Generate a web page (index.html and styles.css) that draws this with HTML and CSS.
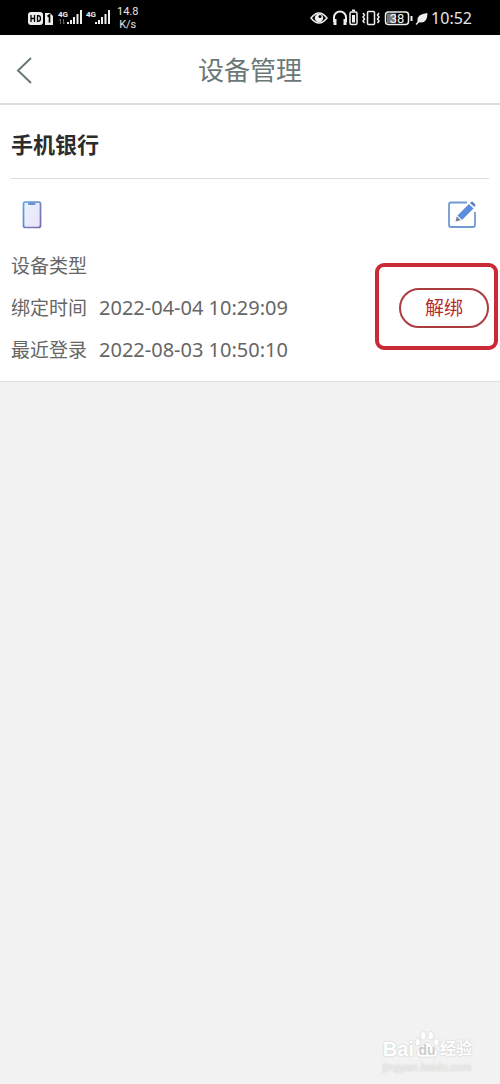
FILE: index.html
```html
<!DOCTYPE html>
<html lang="zh-CN">
<head>
<meta charset="utf-8">
<meta name="viewport" content="width=device-width, initial-scale=1">
<title>设备管理</title>
<link rel="stylesheet" href="styles.css">
</head>
<body>
<div class="status">
  <div class="status-left">
    <svg width="82" height="20" viewBox="0 0 82 20" fill="#eee" aria-hidden="true">
      <rect x="0" y="4" width="15" height="13" rx="3"/>
      <path d="M3 7v7M6.500 7v7M3 10.500H6.500M9.500 7.700v5.600h.5q2.500 0 2.500-2.800t-2.500-2.800z" fill="none" stroke="#000" stroke-width="1.300"/>
      <path d="M17 5h5l3 3v9h-8z"/>
      <path d="M19.500 8.500l2-1.500v7.500" fill="none" stroke="#000" stroke-width="1.700"/>
      <text x="30" y="9" class="tiny">4G</text>
      <path d="M32.500 11v5M31 12.500l1.500-1.500M35.500 11v5M35.500 16l1.500-1.500" stroke="#666" fill="none"/>
      <path d="M39 14h2v2h-2zM42 12h2v4h-2zM45 9h2v7h-2zM48.500 6h2v10h-2zM52 2h2v14h-2z"/>
      <text x="58" y="9" class="tiny">4G</text>
      <path d="M67 14h2v2h-2zM70 12h2v4h-2zM73 9h2v7h-2zM76.500 6h2v10h-2zM80 2h2v14h-2z"/>
    </svg>
    <div class="speed"><span>14.8</span><span>K/s</span></div>
  </div>
  <div class="status-right">
    <svg width="119" height="20" viewBox="0 0 119 20" fill="none" stroke="#eee" stroke-width="1.500" aria-hidden="true">
      <path d="M1 10q8-10 16 0q-8 10-16 0z"/>
      <circle cx="9" cy="10" r="4.200" fill="#eee" stroke="none"/>
      <circle cx="10" cy="8.500" r="1.500" fill="#000" stroke="none"/>
      <path d="M24 14V9.500a6 6 0 0 1 12 0V14" stroke-width="2"/>
      <path d="M25 11v6M35 11v6" stroke-width="3"/>
      <path d="M42 2.500h3" stroke-width="2"/>
      <rect x="40" y="4" width="7" height="12.500" rx="1.500"/>
      <path d="M42 7h3v7.500h-3z" fill="#eee" stroke="none"/>
      <path d="M53 5l1.500 2-1.500 2 1.500 2-1.500 2 1.500 2M69 5l-1.500 2 1.500 2-1.500 2 1.500 2-1.500 2"/>
      <rect x="57.500" y="3.500" width="7" height="13" rx="1"/>
      <rect x="75.500" y="4" width="23" height="12.500" rx="3"/>
      <path d="M77 5.500h9V15h-9z" fill="#777" stroke="none"/>
      <path d="M101.500 8v5" stroke-width="2"/>
      <text x="87" y="15" text-anchor="middle" class="battery">38</text>
      <path d="M107.500 13q-1-7 10-8q0 10-7 9.500l-2-.5l4.500-4.500l-6 6z" fill="#eee" stroke="none"/>
      <path d="M106 16.500l3-3" stroke-width="1.500"/>
    </svg>
    <time class="clock">10:52</time>
  </div>
</div>
<header class="navbar">
  <button class="back" type="button" aria-label="返回">
    <svg width="16" height="28" viewBox="0 0 16 28" fill="none" stroke="#6b7878" stroke-width="2" aria-hidden="true"><path d="M15 2L2 14.500L15 27"/></svg>
  </button>
  <h1 class="title">设备管理</h1>
</header>
<main class="card">
  <h2 class="section">手机银行</h2>
  <div class="device-head">
    <svg width="20" height="28" viewBox="0 0 20 28" aria-hidden="true">
      <defs>
        <linearGradient id="edge" x2="1" y2="1"><stop stop-color="#5ba3e0"/><stop offset="1" stop-color="#7c68a8"/></linearGradient>
        <linearGradient id="face" x2="1" y2="1"><stop stop-color="#e6f3fd"/><stop offset="1" stop-color="#ebe3fb"/></linearGradient>
      </defs>
      <rect x="1.500" y="1" width="17" height="25.500" rx="2" fill="url(#face)" stroke="url(#edge)" stroke-width="1.700"/>
      <path d="M6 1.500v1.500q0 1 1 1h5.500q1 0 1-1V1.500z" fill="#6a94cf"/>
    </svg>
    <button class="edit" type="button" aria-label="编辑">
      <svg width="30" height="28" viewBox="0 0 30 28" aria-hidden="true">
        <path d="M20 1.500H4Q2 1.500 2 3.500v20.500q0 2 2 2h22q2 0 2-2V11" fill="none" stroke="#719bd0" stroke-width="1.800"/>
        <path d="M10.500 14.500L22 3l4.500 4.500L15 19z" fill="#5c8ddd"/>
        <path d="M23 2l1-1q1-1 2 0l2 2q1 1 0 2L27.300 6z" fill="#6582b5"/>
        <path d="M9.700 15.500L8.500 20.500l5.200-1.200z" fill="#777f92"/>
      </svg>
    </button>
  </div>
  <div class="device">
    <dl class="info">
      <div class="row"><dt>设备类型</dt><dd></dd></div>
      <div class="row"><dt>绑定时间</dt><dd>2022-04-04 10:29:09</dd></div>
      <div class="row"><dt>最近登录</dt><dd>2022-08-03 10:50:10</dd></div>
    </dl>
    <div class="action"><button class="unbind" type="button">解绑</button></div>
  </div>
</main>
<footer class="watermark">
  <div class="brand">
    <span>Bai</span>
    <svg width="26" height="30" viewBox="0 0 28 30" aria-hidden="true">
      <g fill="#fff" stroke="#ddd"><ellipse cx="4" cy="12" rx="3" ry="4"/><ellipse cx="10" cy="5" rx="3" ry="4.500"/><ellipse cx="18" cy="5" rx="3" ry="4.500"/><ellipse cx="24" cy="12" rx="3" ry="4"/>
      <path d="M14 12q4 0 6 5q7 4 5 9q-2 3-11 2q-9 1-11-2q-2-5 5-9q2-5 6-5z"/></g>
      <text x="14" y="26" text-anchor="middle" class="du">du</text>
    </svg>
    <span class="brand-cn">经验</span>
  </div>
  <span class="site">jingyan.baidu.com</span>
</footer>
</body>
</html>
```
FILE: styles.css
```css
* { box-sizing: border-box; }
body {
  display: flex;
  flex-direction: column;
  min-height: 100vh;
  margin: 0;
  background: #f2f2f2;
  color: #666;
  font-family: "Noto Sans", "Noto Sans CJK SC", sans-serif;
}
h1, h2, dl, dd { margin: 0; }
button { padding: 0; border: 0; background: none; font-family: inherit; }
svg { display: block; flex: none; }
.status {
  display: flex;
  align-items: center;
  justify-content: space-between;
  height: 35px;
  padding: 0 28px;
  background: #000;
  color: #e6e6e6;
}
.status-left, .status-right { display: flex; align-items: center; }
.status-left { gap: 7px; }
.speed {
  display: flex;
  flex-direction: column;
  align-items: center;
  font: 11px/13px "Roboto", sans-serif;
}
.tiny { font: bold 8px "Roboto", sans-serif; }
.battery { font: 13px "Roboto", sans-serif; fill: #eee; stroke: none; }
.status-right { gap: 2px; }
.clock { font: 16px/20px "Noto Sans", sans-serif; }
.navbar {
  display: grid;
  grid-template-columns: 32px 1fr 32px;
  align-items: center;
  height: 70px;
  padding: 2px 16px 0;
  border-bottom: 2px solid #ddd;
  background: #fff;
}
.back { justify-self: start; }
.title {
  color: #6b7878;
  font-size: 26px;
  font-weight: 400;
  line-height: 40px;
  text-align: center;
}
.card {
  padding: 0 11px 10px;
  border-bottom: 1px solid #e0e0e0;
  background: #fff;
}
.section {
  padding: 23px 0 18px;
  border-bottom: 1px solid #ddd;
  color: #2c2c2c;
  font-size: 22px;
  line-height: 32px;
}
.device-head {
  display: flex;
  justify-content: space-between;
  padding: 22px 12px 16px 11px;
}
.device { display: flex; justify-content: space-between; align-items: center; }
.row {
  display: flex;
  gap: 12px;
  font-size: 19px;
  line-height: 42px;
}
.row dd { font-size: 20px; }
.action { position: relative; }
.action::after {
  content: "";
  position: absolute;
  inset: -25px -9px -22px -24px;
  border: 4px solid #c92a36;
  border-radius: 9px;
  pointer-events: none;
}
.unbind {
  display: block;
  width: 90px;
  height: 40px;
  border: 2px solid #ac3c40;
  border-radius: 20px;
  color: #b92b2b;
  font-size: 19px;
  line-height: 36px;
}
.watermark {
  display: flex;
  flex-direction: column;
  align-self: flex-end;
  margin-top: auto;
  padding: 0 28px 10px 0;
  color: #fff;
  text-shadow: 0 0 2px #bbb;
}
.brand {
  display: flex;
  align-items: flex-end;
  font: bold 20px/22px "Liberation Sans", "Noto Sans CJK SC", sans-serif;
}
.brand-cn { font-size: 16px; }
.du { font: bold 15px "Liberation Sans", sans-serif; fill: #ccc; text-shadow: none; }
.site { color: #eee; font: 11px/14px "Liberation Sans", sans-serif; }
```
